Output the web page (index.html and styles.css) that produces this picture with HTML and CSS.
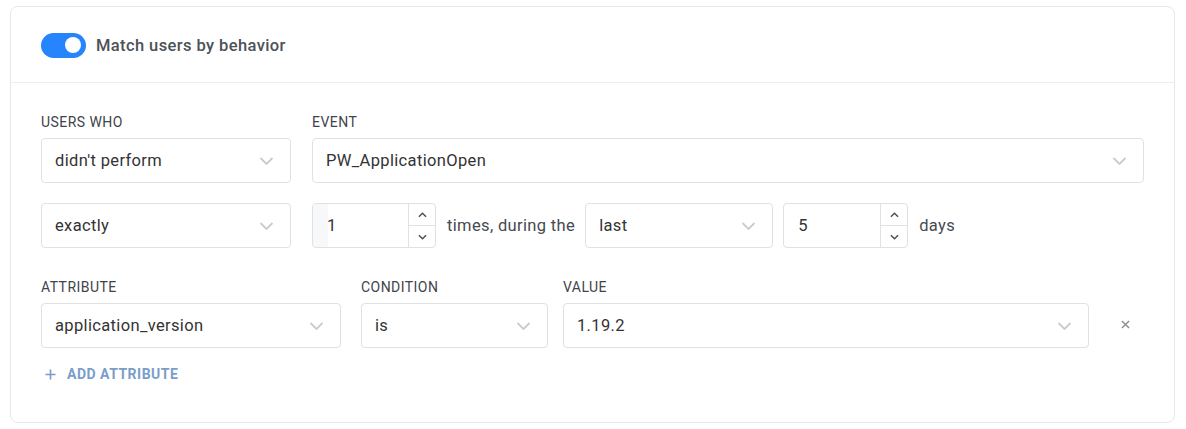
FILE: index.html
```html
<!DOCTYPE html>
<html>
<head>
<meta charset="utf-8">
<link rel="stylesheet" href="styles.css">
</head>
<body>
<div class="card">
  <div class="card-header">
    <span class="toggle"><span class="knob"></span></span>
    <span class="title">Match users by behavior</span>
  </div>
  <div class="card-body">
    <div class="row">
      <div class="field w-users">
        <div class="label">USERS WHO</div>
        <div class="select"><span>didn't perform</span><svg class="chev" viewBox="0 0 14 8"><path d="M1 1l6 6 6-6"/></svg></div>
      </div>
      <div class="field grow">
        <div class="label">EVENT</div>
        <div class="select"><span>PW_ApplicationOpen</span><svg class="chev" viewBox="0 0 14 8"><path d="M1 1l6 6 6-6"/></svg></div>
      </div>
    </div>
    <div class="row row2">
      <div class="select w-users"><span>exactly</span><svg class="chev" viewBox="0 0 14 8"><path d="M1 1l6 6 6-6"/></svg></div>
      <div class="number n1">
        <span class="strip"></span>
        <span class="num-val">1</span>
        <span class="spin">
          <span class="spin-btn"><svg viewBox="0 0 10 6"><path d="M1 5l4-4 4 4"/></svg></span>
          <span class="spin-btn"><svg viewBox="0 0 10 6"><path d="M1 1l4 4 4-4"/></svg></span>
        </span>
      </div>
      <span class="text">times, during the</span>
      <div class="select w-last"><span>last</span><svg class="chev" viewBox="0 0 14 8"><path d="M1 1l6 6 6-6"/></svg></div>
      <div class="number n2">
        <span class="num-val">5</span>
        <span class="spin">
          <span class="spin-btn"><svg viewBox="0 0 10 6"><path d="M1 5l4-4 4 4"/></svg></span>
          <span class="spin-btn"><svg viewBox="0 0 10 6"><path d="M1 1l4 4 4-4"/></svg></span>
        </span>
      </div>
      <span class="text">days</span>
    </div>
    <div class="row row3">
      <div class="field w-attr">
        <div class="label">ATTRIBUTE</div>
        <div class="select"><span>application_version</span><svg class="chev" viewBox="0 0 14 8"><path d="M1 1l6 6 6-6"/></svg></div>
      </div>
      <div class="field w-cond">
        <div class="label">CONDITION</div>
        <div class="select"><span>is</span><svg class="chev" viewBox="0 0 14 8"><path d="M1 1l6 6 6-6"/></svg></div>
      </div>
      <div class="field w-value">
        <div class="label">VALUE</div>
        <div class="select"><span>1.19.2</span><svg class="chev" viewBox="0 0 14 8"><path d="M1 1l6 6 6-6"/></svg></div>
      </div>
      <div class="remove"><svg viewBox="0 0 10 10"><path d="M1 1l8 8M9 1l-8 8"/></svg></div>
    </div>
    <div class="add">
      <svg class="plus" viewBox="0 0 12 12"><path d="M6 0.5v11M0.5 6h11"/></svg>
      <span>ADD ATTRIBUTE</span>
    </div>
  </div>
</div>
</body>
</html>
```

FILE: styles.css
```css
* { box-sizing: border-box; }
html, body { margin: 0; padding: 0; background: #fff; }
body {
  font-family: Roboto, "Liberation Sans", Arial, sans-serif;
  color: #333;
  padding: 6px 0 0 10px;
}
.card {
  width: 1165px;
  height: 417px;
  border: 1px solid #e6e7ea;
  border-radius: 8px;
  background: #fff;
}
.card-header {
  height: 76px;
  border-bottom: 1px solid #eceef0;
  display: flex;
  align-items: center;
  padding-left: 30px;
  padding-top: 1px;
}
.toggle {
  width: 45px;
  height: 25px;
  border-radius: 13px;
  background: #2684fc;
  position: relative;
  display: inline-block;
}
.knob {
  position: absolute;
  width: 16px;
  height: 16px;
  border-radius: 50%;
  background: #fff;
  right: 5px;
  top: 4.5px;
}
.title {
  margin-left: 10px;
  font-size: 16.5px;
  font-weight: 500;
  letter-spacing: 0.4px;
  color: #4d5258;
}
.card-body {
  padding: 29px 30px 0 30px;
}
.row { display: flex; align-items: flex-end; }
.field { display: flex; flex-direction: column; }
.grow { flex: 1; margin-left: 21px; }
.label {
  font-size: 14px;
  line-height: 20px;
  color: #3f444a;
  margin-bottom: 6px;
  font-weight: 400;
  letter-spacing: 0.45px;
}
.w-users { width: 250px; flex: none; }
.select {
  height: 45px;
  border: 1px solid #dfe1e4;
  border-radius: 4px;
  display: flex;
  align-items: center;
  justify-content: space-between;
  padding: 0 14px 0 13px;
  font-size: 16.5px;
  letter-spacing: 0.35px;
  color: #333;
  background: #fff;
}
.chev {
  width: 15px;
  height: 8px;
  fill: none;
  stroke: #c9cbcf;
  stroke-width: 1.8;
  margin-right: 2px;
}
.row2 { margin-top: 20px; align-items: center; }
.number {
  height: 45px;
  border: 1px solid #dfe1e4;
  border-radius: 4px;
  display: flex;
  align-items: center;
  font-size: 16.5px;
  position: relative;
  background: #fff;
}
.n1 { width: 124px; margin-left: 21px; }
.n2 { width: 125px; margin-left: 10px; }
.strip {
  position: absolute;
  left: 0; top: 0; bottom: 0;
  width: 15px;
  background: #f7f8f9;
  border-radius: 4px 0 0 4px;
}
.num-val { flex: 1; padding-left: 14px; position: relative; }
.spin {
  width: 27px;
  height: 100%;
  border-left: 1px solid #dfe1e4;
  display: flex;
  flex-direction: column;
}
.spin-btn {
  flex: 1;
  display: flex;
  align-items: center;
  justify-content: center;
}
.spin-btn + .spin-btn { border-top: 1px solid #dfe1e4; }
.spin-btn svg {
  width: 9px;
  height: 6px;
  fill: none;
  stroke: #4a4f55;
  stroke-width: 1.6;
}
.text { font-size: 16.5px; letter-spacing: 0.35px; color: #454a50; margin-left: 11px; }
.w-last { width: 188px; margin-left: 10px; }
.row3 { margin-top: 29px; }
.w-attr { width: 300px; }
.w-cond { width: 187px; margin-left: 20px; }
.w-value { width: 526px; margin-left: 15px; }
.remove {
  height: 45px;
  width: 55px;
  display: flex;
  align-items: center;
  justify-content: center;
  padding-left: 18px;
}
.remove svg {
  width: 9px;
  height: 9px;
  fill: none;
  stroke: #8a8d92;
  stroke-width: 1.6;
  margin-bottom: 2px;
}
.add {
  margin-top: 16px;
  display: flex;
  align-items: center;
  color: #7a9ec9;
  font-size: 14px;
  font-weight: 700;
  letter-spacing: 0.5px;
  height: 20px;
  padding-left: 4px;
}
.plus {
  width: 11px;
  height: 11px;
  fill: none;
  stroke: #7a9ec9;
  stroke-width: 1.8;
  margin-right: 11px;
}
```
